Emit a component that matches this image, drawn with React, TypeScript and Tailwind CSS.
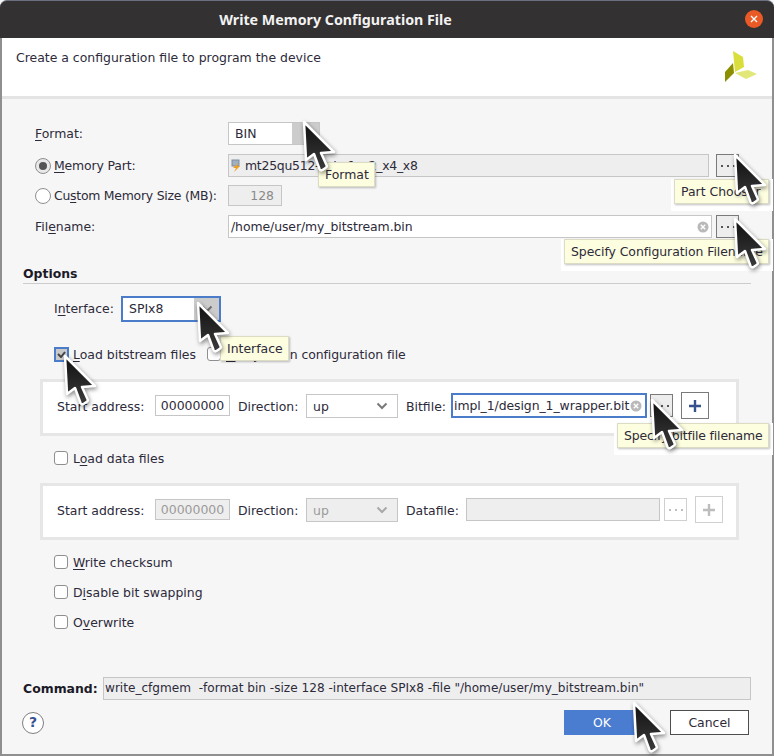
import React from "react";

const Cursor = ({ x, y }: { x: number; y: number }) => (
  <svg
    className="absolute z-20 drop-shadow-[1px_2px_2px_rgba(0,0,0,0.45)]"
    style={{ left: x - 3, top: y - 3 }}
    width="40"
    height="56"
    viewBox="-3 -3 40 56"
  >
    <defs>
      <linearGradient id="cg" x1="0" y1="0" x2="0" y2="1">
        <stop offset="0" stopColor="#111111" />
        <stop offset="1" stopColor="#3a3a3a" />
      </linearGradient>
    </defs>
    <path
      d="M0 0 L2 38 L10 32 L15.500 47 Q16.500 49 18.500 48 L21.500 46 Q23.500 45 22.500 43 L17 31 L30 30 Z"
      fill="url(#cg)"
      stroke="#ffffff"
      strokeWidth="2.500"
      strokeLinejoin="round"
    />
  </svg>
);

const Tip = ({ x, y, w, text, halo, className = "" }: { x: number; y: number; w: number; text: string; halo?: boolean; className?: string }) => (
  <>
    {halo && <div className="absolute z-10 bg-white" style={{ left: x - 3, top: y, width: w + 7, height: 32 }} />}
    <div
      className={`absolute z-10 flex h-[25px] items-center whitespace-nowrap border border-[#dcdcc4] bg-[#fdfddf] pl-[6px] text-[#2d2a3a] shadow-[1px_1px_2px_rgba(0,0,0,0.25)] ${className}`}
      style={{ left: x, top: y, width: w }}
    >
      {text}
    </div>
  </>
);

const U = ({ children }: { children: React.ReactNode }) => <span className="underline underline-offset-2">{children}</span>;

const Chevron = ({ color = "#6e6e6e" }: { color?: string }) => (
  <svg width="12" height="8" viewBox="0 0 12 8" fill="none">
    <path d="M1.500 1.500 L6 6 L10.500 1.500" stroke={color} strokeWidth="2" />
  </svg>
);

const Clear = () => (
  <svg width="12" height="12" viewBox="0 0 12 12">
    <circle cx="6" cy="6" r="5.500" fill="#b9b9b9" />
    <path d="M3.800 3.800 L8.200 8.200 M8.200 3.800 L3.800 8.200" stroke="#ffffff" strokeWidth="1.400" />
  </svg>
);

const Dots = ({ color, h, w, border, bg }: { color: string; h: string; w: string; border: string; bg: string }) => (
  <div className={`flex items-center justify-center gap-[4px] border ${h} ${w} ${border} ${bg}`}>
    <span className="h-[2px] w-[2px]" style={{ background: color }} />
    <span className="h-[2px] w-[2px]" style={{ background: color }} />
    <span className="h-[2px] w-[2px]" style={{ background: color }} />
  </div>
);

const Plus = ({ color, border }: { color: string; border: string }) => (
  <div className={`flex h-[27px] w-[28px] items-center justify-center border bg-white ${border}`}>
    <svg width="14" height="14" viewBox="0 0 14 14">
      <path d="M7 1 V13 M1 7 H13" stroke={color} strokeWidth="2.400" />
    </svg>
  </div>
);

const Check = ({ children }: { children: React.ReactNode }) => (
  <div className="flex h-4 items-center">
    <div className="mr-[5px] h-[14px] w-[14px] rounded-[3px] border border-[#8f8f8f] bg-white" />
    <span>{children}</span>
  </div>
);

export default function App() {
  return (
    <div
      className="relative flex h-[756px] w-[774px] flex-col overflow-hidden bg-[#f6f6f6] text-[12.45px] leading-[15px] text-[#2d2a3a]"
      style={{ fontFamily: '"DejaVu Sans", sans-serif' }}
    >
      {/* title bar */}
      <div className="relative flex h-[38px] shrink-0 items-center justify-center rounded-t-[7px] border-t border-[#6a7080] bg-[#333131] pr-[103px]">
        <span className="text-[14.25px] font-bold text-[#f2f2f2]" style={{ fontFamily: '"Noto Sans", sans-serif' }}>
          Write Memory Configuration File
        </span>
        <div className="absolute right-[11px] top-[9px] flex h-[18px] w-[18px] items-center justify-center rounded-full bg-[#ea5a26]">
          <svg width="8" height="8" viewBox="0 0 8 8">
            <path d="M1 1 L7 7 M7 1 L1 7" stroke="#ffffff" strokeWidth="1.300" />
          </svg>
        </div>
      </div>

      {/* content frame */}
      <div className="flex flex-1 flex-col border-x-2 border-b-2 border-x-[#8f8f8f] border-b-[#8f8f8f]">
        {/* header */}
        <div className="flex h-[61px] shrink-0 justify-between border-b-[3px] border-[#e4e4e4] bg-white pl-[14px] pr-[15px] pt-[12px]">
          <span>Create a configuration file to program the device</span>
          <svg width="32" height="33" viewBox="0 0 32 33">
            <path d="M8 1 L18 7 L19 17 L10 22 Z" fill="#d9de3c" />
            <path d="M10 23 L23 20 L32 24 L21 29 Z" fill="#e2e77a" />
            <path d="M0 22 L8 13 L9 23 L0 32 Z" fill="#8c9000" />
          </svg>
        </div>

        <div className="flex flex-1 flex-col pl-[33px] pr-[21px]">
          {/* Format */}
          <div className="mt-[23px] flex h-[23px] items-center">
            <div className="w-[193px]">
              <U>F</U>ormat:
            </div>
            <div className="flex h-[23px] w-[92px] border border-[#c6c6c6] bg-white">
              <span className="flex-1 pl-[6px] pt-[3px]">BIN</span>
              <div className="w-[27px] bg-[#cccccc]" />
            </div>
          </div>

          {/* Memory */}
          <div className="mt-[9px] flex h-[23px] items-center">
            <div className="mr-[3px] flex h-[16px] w-[16px] items-center justify-center rounded-full border border-[#8f8f8f] bg-[#e9e9e9]">
              <div className="h-[8px] w-[8px] rounded-full bg-[#555555]" />
            </div>
            <div className="w-[174px] tracking-[-0.15px]">
              <U>M</U>emory Part:
            </div>
            <div className="flex h-[23px] w-[481px] items-center border border-[#c6c6c6] bg-[#eeeeee] pl-[2px] tracking-[-0.25px]">
              <svg className="mr-[3px]" width="11" height="13" viewBox="0 0 11 13">
                <rect x="1" y="1" width="7" height="6" fill="#9fb0c4" stroke="#7d8b9c" />
                <path d="M7 4 L2 9 L5 9 L3 13 L9 7 L6 7 Z" fill="#f0a020" />
              </svg>
              mt25qu512-spi-x1_x2_x4_x8
            </div>
            <div className="ml-[7px]">
              <Dots color="#555555" h="h-[23px]" w="w-[23px]" border="border-[#7a7a7a]" bg="bg-[#ededed]" />
            </div>
          </div>

          {/* Custom */}
          <div className="mt-[8px] flex h-[21px] items-center">
            <div className="mr-[3px] h-[16px] w-[16px] rounded-full border border-[#8f8f8f] bg-white" />
            <div className="w-[174px] whitespace-nowrap tracking-[-0.25px]">
              Cu<U>s</U>tom Memory Size (MB):
            </div>
            <div className="flex h-[21px] w-[54px] items-center justify-end border border-[#c6c6c6] bg-[#eeeeee] pr-[7px] text-[#8a8a8a]">
              128
            </div>
          </div>

          {/* Filename */}
          <div className="mt-[9px] flex h-[23px] items-center">
            <div className="w-[193px]">
              Fil<U>e</U>name:
            </div>
            <div className="flex h-[23px] w-[484px] items-center justify-between border border-[#c6c6c6] bg-white pl-[2px] pr-[2px] tracking-[-0.08px]">
              /home/user/my_bitstream.bin
              <Clear />
            </div>
            <div className="ml-[4px]">
              <Dots color="#555555" h="h-[23px]" w="w-[23px]" border="border-[#7a7a7a]" bg="bg-[#ededed]" />
            </div>
          </div>

          {/* Options */}
          <div className="ml-[-12px] mt-[25px] flex h-[21px] items-start border-b border-[#cccccc] font-bold text-[#1c1a28]">
            <span className="pt-[3px]">Options</span>
          </div>

          {/* Interface */}
          <div className="mt-[12px] flex h-[26px] items-center pl-[19px]">
            <div className="w-[67px] pb-px">
              I<U>n</U>terface:
            </div>
            <div className="flex h-[26px] w-[100px] border-2 border-[#4a7cc9] bg-white">
              <span className="flex-1 pl-[6px] pt-[3px]">SPIx8</span>
              <div className="flex w-[25px] items-center justify-center bg-[#cccccc]">
                <Chevron />
              </div>
            </div>
          </div>

          {/* load row */}
          <div className="mt-[24px] flex h-4 items-center pl-[19px]">
            <div className="mr-[4px] flex h-[15px] w-[15px] items-center justify-center border-2 border-[#4a7cc9] bg-[#c9c9c9]">
              <svg width="9" height="7" viewBox="0 0 9 7">
                <path d="M1 3 L4 6 L8 1" stroke="#444444" strokeWidth="2" fill="none" />
              </svg>
            </div>
            <span className="w-[134px] whitespace-nowrap">
              <U>L</U>oad bitstream files
            </span>
            <div className="mr-[5px] h-[14px] w-[14px] rounded-[3px] border border-[#8f8f8f] bg-white" />
            <span className="whitespace-nowrap tracking-[-0.06px]">
              <U>D</U>aisy chain configuration file
            </span>
          </div>

          {/* panel 1 */}
          <div className="ml-[5px] mt-[17px] flex h-[57px] w-[699px] shrink-0 items-start border-[3px] border-[#e6e6e6] bg-white pl-[14px] pt-[11px]">
            <span className="mt-[6px] w-[98px] whitespace-nowrap">Start address:</span>
            <div className="mt-[2px] flex h-[21px] w-[75px] items-center justify-center border border-[#c6c6c6] bg-white">00000000</div>
            <span className="ml-[8px] mt-[6px] w-[68px]">Direction:</span>
            <div className="mt-px flex h-[24px] w-[92px] items-center justify-between border border-[#c6c6c6] bg-white pl-[6px] pr-[9px]">
              up
              <Chevron color="#7a7a7a" />
            </div>
            <span className="ml-[8px] mt-[6px] w-[45px]">Bitfile:</span>
            <div className="flex h-[25px] w-[196px] items-center justify-between border-2 border-[#4a7cc9] bg-white pl-px pr-[3px]">
              <span className="whitespace-nowrap tracking-[-0.08px]">impl_1/design_1_wrapper.bit</span>
              <Clear />
            </div>
            <div className="ml-[3px] mt-px">
              <Dots color="#555555" h="h-[23px]" w="w-[23px]" border="border-[#7a7a7a]" bg="bg-[#ededed]" />
            </div>
            <div className="ml-[8px] mt-[-1px]">
              <Plus color="#35528e" border="border-[#7a7a7a]" />
            </div>
          </div>

          {/* load data */}
          <div className="ml-[19px] mt-[14px]">
            <Check>
              L<U>o</U>ad data files
            </Check>
          </div>

          {/* panel 2 */}
          <div className="ml-[5px] mt-[17px] flex h-[57px] w-[699px] shrink-0 items-start border-[3px] border-[#e6e6e6] bg-white pl-[14px] pt-[11px] text-[#2d2a3a]">
            <span className="mt-[6px] w-[98px] whitespace-nowrap">Start address:</span>
            <div className="mt-[2px] flex h-[21px] w-[75px] items-center justify-center border border-[#c6c6c6] bg-[#eeeeee] text-[#9a9a9a]">
              00000000
            </div>
            <span className="ml-[8px] mt-[6px] w-[68px]">Direction:</span>
            <div className="mt-px flex h-[24px] w-[92px] items-center justify-between border border-[#c6c6c6] bg-[#eeeeee] pl-[6px] pr-[9px] text-[#9a9a9a]">
              up
              <Chevron color="#a8a8a8" />
            </div>
            <span className="ml-[8px] mt-[6px] w-[60px]">Datafile:</span>
            <div className="mt-[1px] h-[23px] w-[194px] border border-[#c6c6c6] bg-[#eeeeee]" />
            <div className="ml-[4px] mt-px">
              <Dots color="#bdbdbd" h="h-[23px]" w="w-[23px]" border="border-[#d0d0d0]" bg="bg-white" />
            </div>
            <div className="ml-[8px] mt-[-1px]">
              <Plus color="#bdbdbd" border="border-[#d0d0d0]" />
            </div>
          </div>

          {/* checks */}
          <div className="ml-[19px] mt-[14px] flex flex-col gap-[14px]">
            <Check>
              <U>W</U>rite checksum
            </Check>
            <Check>
              D<U>i</U>sable bit swapping
            </Check>
            <Check>
              O<U>v</U>erwrite
            </Check>
          </div>

          {/* command */}
          <div className="ml-[-13px] mt-[47px] flex h-[23px] items-center">
            <span className="w-[81px] pl-px font-bold text-[#1c1a28]">Command:</span>
            <div className="flex h-[23px] w-[648px] items-center whitespace-pre border border-[#c6c6c6] bg-[#eeeeee] pl-px text-[12.1px]">
              {'write_cfgmem  -format bin -size 128 -interface SPIx8 -file "/home/user/my_bitstream.bin"'}
            </div>
          </div>

          {/* bottom */}
          <div className="ml-[-13px] mt-[10px] flex h-[25px] items-center">
            <div className="flex h-[22px] w-[22px] items-center justify-center rounded-full border border-[#7f7f7f] bg-white text-[14px] font-bold text-[#35528e]">
              ?
            </div>
            <div className="ml-[520px] flex h-[25px] w-[76px] items-center justify-center bg-[#4a7cd0] text-white">OK</div>
            <div className="ml-[30px] flex h-[25px] w-[79px] items-center justify-center border border-[#4e4e4e] bg-white">Cancel</div>
          </div>
        </div>
      </div>

      {/* overlays: tooltips + cursors */}
      <Tip x={318} y={162} w={57} text="Format" />
      <Tip x={674} y={179} w={95} text="Part Chooser" halo />
      <Tip x={564} y={239} w={205} text="Specify Configuration Filename" halo className="tracking-[-0.06px]" />
      <Tip x={220} y={336} w={69} text="Interface" className="pl-[5px]" />
      <Tip x={617} y={423} w={152} text="Specify bitfile filename" halo className="tracking-[-0.17px]" />

      <Cursor x={304} y={122} />
      <Cursor x={735} y={155} />
      <Cursor x={735} y={219} />
      <Cursor x={198} y={303} />
      <Cursor x={65} y={356} />
      <Cursor x={652} y={400} />
      <Cursor x={634} y={703} />
    </div>
  );
}
